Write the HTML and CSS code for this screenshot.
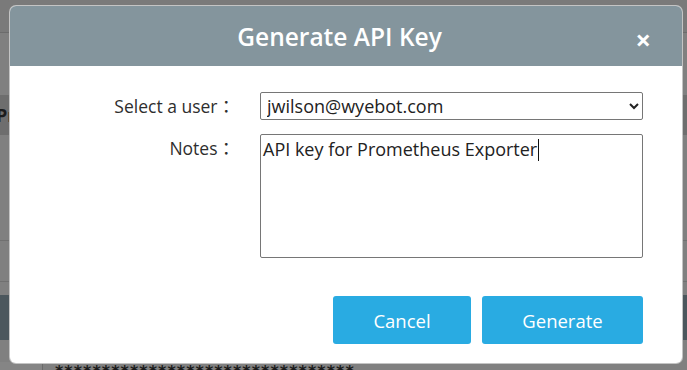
FILE: index.html
```html
<!DOCTYPE html>
<html>
<head>
    <title>Generate API Key</title>
    <link rel="stylesheet" href="styles.css">
</head>
<body>
    <!-- page behind the dialog -->
    <div class="page">
        <div class="page-top"></div>
        <div class="page-band"><span class="page-heading">Pr</span></div>
        <div class="page-row row-tall"></div>
        <div class="page-row"></div>
        <div class="page-gap"></div>
        <div class="page-dark"></div>
        <div class="page-spacer"></div>
        <div class="page-bottom">
            <div class="page-cell"></div>
            <div class="page-key">********************************</div>
        </div>
    </div>

    <div class="modal">
        <div class="modal-header">
            <h2 class="modal-title">Generate API Key</h2>
            <span class="close">&times;</span>
        </div>
        <div class="modal-body">
            <div class="form">
                <label class="form-label" for="user">Select a user<span class="colon">&#xFF1A;</span></label>
                <select class="form-select" id="user">
                    <option>jwilson@wyebot.com</option>
                </select>
                <label class="form-label" for="notes">Notes<span class="colon">&#xFF1A;</span></label>
                <div class="form-notes" id="notes">API key for Prometheus Exporter<span class="caret"></span></div>
            </div>
            <div class="btn-group">
                <button class="button btn-cancel">Cancel</button>
                <button class="button btn-generate">Generate</button>
            </div>
        </div>
    </div>
</body>
</html>
```

FILE: styles.css
```css
body {
    margin: 0;
    width: 687px;
    height: 370px;
    overflow: hidden;
    position: relative;
    font-family: 'Open Sans', 'Noto Sans CJK TC', sans-serif;
    background-color: #808080;
}

/* Background page (dimmed) */
.page {
    display: flex;
    flex-direction: column;
}

.page-top {
    height: 32px;
    background-color: #7a7a7a;
    border-bottom: 1px solid #6c6c6c;
}

.page-band {
    margin-top: 62px;
    height: 40px;
    background-color: #6e6e6e;
    display: flex;
    align-items: center;
}

.page-heading {
    margin-left: -4px;
    font-size: 18px;
    font-weight: 700;
    color: #1c1c1c;
}

.page-row {
    height: 40px;
    border-bottom: 1px solid #707070;
}

.row-tall {
    height: 105px;
}

.page-gap {
    height: 13px;
}

.page-dark {
    height: 45px;
    background-color: #4c575d;
}

.page-spacer {
    height: 22px;
}

.page-bottom {
    display: flex;
    height: 20px;
}

.page-cell {
    width: 42px;
    border-right: 1px solid #6a6a6a;
    background-color: #858585;
}

.page-key {
    margin-left: 12px;
    font-family: 'DejaVu Sans', sans-serif;
    font-size: 16px;
    font-weight: 700;
    line-height: 20px;
    color: #1a1a1a;
    letter-spacing: 1px;
}

/* Dialog */
.modal {
    position: absolute;
    left: 10px;
    top: 6px;
    width: 672px;
    height: 357px;
    background-color: #ffffff;
    border-radius: 6px;
    box-shadow: 0 0 0 1px #c4c4c4;
    overflow: hidden;
}

.modal-header {
    position: relative;
    height: 60px;
    background-color: #84959d;
    display: flex;
    align-items: center;
    justify-content: center;
    padding-right: 13px;
}

.modal-title {
    margin: 0;
    font-size: 24.5px;
    font-weight: 600;
    color: #ffffff;
}

.close {
    position: absolute;
    right: 31px;
    top: 21px;
    font-size: 27px;
    font-weight: 700;
    line-height: 26px;
    color: #ffffff;
}

.modal-body {
    padding: 26px 39px 0 0;
}

.form {
    display: grid;
    grid-template-columns: 225px 383px;
    column-gap: 25px;
    row-gap: 14px;
    align-items: start;
}

.form-label {
    text-align: right;
    font-size: 17.5px;
    line-height: 27px;
    color: #2e2e2e;
}

.colon {
    font-family: 'Noto Sans CJK TC', sans-serif;
    font-size: 17.5px;
}

.form-select {
    height: 28px;
    margin: 0;
    padding: 0 2px;
    font-family: 'Open Sans', sans-serif;
    font-size: 18px;
    color: #222222;
    background-color: #ffffff;
    border: 1px solid #767676;
    border-radius: 2px;
}

.form-notes {
    height: 124px;
    box-sizing: border-box;
    padding: 2px 2px;
    font-size: 18px;
    line-height: 25px;
    color: #222222;
    border: 1px solid #767676;
    border-radius: 2px;
}

.caret {
    display: inline-block;
    width: 1px;
    height: 22px;
    margin-left: 1px;
    vertical-align: -5px;
    background-color: #111111;
}

.btn-group {
    display: flex;
    justify-content: flex-end;
    gap: 11px;
    margin-top: 38px;
}

.button {
    height: 48px;
    font-family: 'Open Sans', sans-serif;
    font-size: 18.5px;
    color: #ffffff;
    background-color: #29abe2;
    border: none;
    border-radius: 3px;
    cursor: pointer;
}

.btn-cancel {
    width: 138px;
}

.btn-generate {
    width: 161px;
}
```
